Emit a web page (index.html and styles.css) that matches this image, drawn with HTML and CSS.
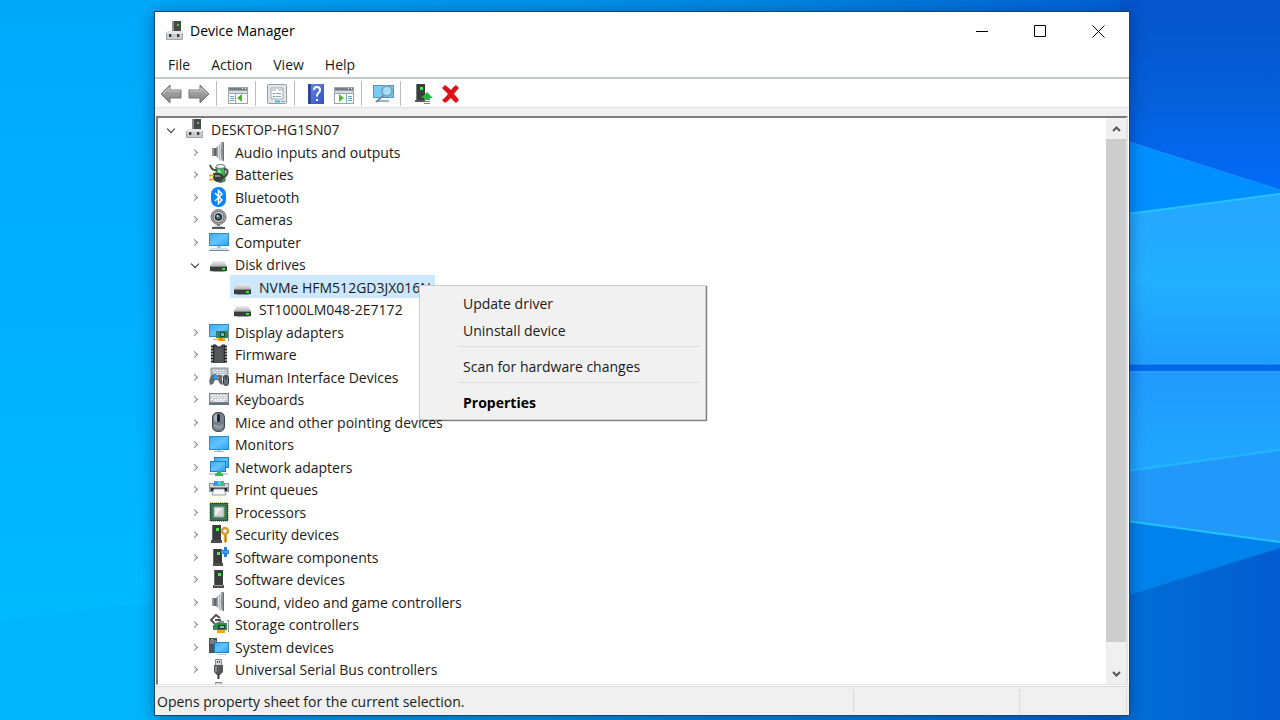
FILE: index.html
```html
<!DOCTYPE html>
<html lang="en">
<head>
    <meta charset="UTF-8">
    <title>Device Manager</title>
    <link rel="stylesheet" href="styles.css">
</head>
<body>
    <!-- Wallpaper -->
    <svg class="wallpaper" viewBox="0 0 1280 720" preserveAspectRatio="none" aria-hidden="true">
        <defs>
            <linearGradient id="sky" x1="0" y1="0" x2="1" y2="0">
                <stop offset="0" stop-color="#00adfb"/>
                <stop offset="0.15" stop-color="#00a4f6"/>
                <stop offset="0.6" stop-color="#0086e2"/>
                <stop offset="0.85" stop-color="#0064d6"/>
                <stop offset="1" stop-color="#0450c6"/>
            </linearGradient>
            <linearGradient id="leftGlow" x1="0" y1="0" x2="0" y2="1">
                <stop offset="0" stop-color="#00a8fa"/>
                <stop offset="0.45" stop-color="#00b0ff"/>
                <stop offset="0.84" stop-color="#00baff"/>
                <stop offset="1" stop-color="#00b4fc"/>
            </linearGradient>
            <linearGradient id="topRight" x1="0" y1="0" x2="0" y2="1">
                <stop offset="0" stop-color="#0554cb"/>
                <stop offset="0.5" stop-color="#0560da"/>
                <stop offset="1" stop-color="#026cfc"/>
            </linearGradient>
            <linearGradient id="pane" x1="0" y1="0" x2="0" y2="1">
                <stop offset="0" stop-color="#25a6ff"/>
                <stop offset="0.5" stop-color="#22b0ff"/>
                <stop offset="1" stop-color="#1f9cff"/>
            </linearGradient>
            <linearGradient id="pane2" x1="0" y1="0" x2="0" y2="1">
                <stop offset="0" stop-color="#209aff"/>
                <stop offset="1" stop-color="#20a8ff"/>
            </linearGradient>
            <linearGradient id="floor" x1="0" y1="0" x2="1" y2="0">
                <stop offset="0" stop-color="#006fd6"/>
                <stop offset="1" stop-color="#045cd0"/>
            </linearGradient>
        </defs>
        <rect width="1280" height="720" fill="url(#sky)"/>
        <rect width="160" height="720" fill="url(#leftGlow)"/>
        <path d="M0 621L160 601V720H0z" fill="#00b5fb"/>
        <path d="M1120 0H1280V200H1120z" fill="url(#topRight)"/>
        <path d="M1120 139L1280 190V230H1120z" fill="#008fff"/>
        <path d="M1120 215L1280 194V366H1120z" fill="url(#pane)"/>
        <path d="M1120 371H1280V453L1120 474z" fill="url(#pane2)"/>
        <path d="M1120 364H1280V371H1120z" fill="#0069ea"/>
        <path d="M1120 472L1280 450V543L1120 520z" fill="#2298fa"/>
        <path d="M1120 520L1280 542V550L1120 599z" fill="#0082ec"/>
        <path d="M1120 598L1280 548V720H1120z" fill="url(#floor)"/>
        <g fill="none" stroke="#22c4ff">
            <path d="M1120 139L1280 190" stroke="#1798fa"/>
            <path d="M1120 215L1280 194" stroke-width="2"/>
            <path d="M1120 364H1280M1120 372H1280" stroke="#2aa8ff"/>
            <path d="M1120 472L1280 450" stroke-width="2" stroke="#20b8ff"/>
            <path d="M1120 520L1280 542" stroke-width="2"/>
        </g>
    </svg>

    <!-- Icon set -->
    <svg class="sprite" aria-hidden="true">
        <defs>
            <linearGradient id="screen" x1="0" y1="0" x2="1" y2="1">
                <stop offset="0" stop-color="#3fa9f0"/>
                <stop offset="0.5" stop-color="#62c4ff"/>
                <stop offset="1" stop-color="#2ba2f5"/>
            </linearGradient>
            <linearGradient id="metal" x1="0" y1="0" x2="1" y2="0">
                <stop offset="0" stop-color="#5d6368"/>
                <stop offset="0.5" stop-color="#d5d9dc"/>
                <stop offset="1" stop-color="#777d82"/>
            </linearGradient>
            <linearGradient id="arrow" x1="0" y1="0" x2="0" y2="1">
                <stop offset="0" stop-color="#b4b4b4"/>
                <stop offset="1" stop-color="#828282"/>
            </linearGradient>
            <linearGradient id="lid" x1="0" y1="0" x2="0" y2="1">
                <stop offset="0" stop-color="#eeeeee"/>
                <stop offset="1" stop-color="#b4b6b8"/>
            </linearGradient>
            <linearGradient id="helpBlue" x1="0" y1="0" x2="1" y2="1">
                <stop offset="0" stop-color="#6b8be6"/>
                <stop offset="1" stop-color="#2f4fc0"/>
            </linearGradient>

            <symbol id="i-computer-root" viewBox="0 0 20 20">
                <path d="M7 0h9v11H7z" fill="#46484a"/>
                <path d="M7 0h2v11H7z" fill="#8a8c8e"/>
                <path d="M12 3h2v2h-2z" fill="#35e04a"/>
                <path d="M3 10h13l2 3v6H1v-6z" fill="#cbccd0"/>
                <path d="M3 10h13l2 3H1z" fill="#e3e4e6"/>
                <path d="M1.500 12v6.500h16V12" fill="none" stroke="#a4a6a9"/>
                <path d="M4 13h3v3H4zM12 13h3v3h-3z" fill="#3b3d40"/>
                <path d="M6 13h1v3H6zM14 13h1v3h-1z" fill="#9b9da0"/>
            </symbol>
            <symbol id="i-speaker" viewBox="0 0 20 20">
                <path d="M3 6h4v8H3z" fill="#5b6874"/>
                <path d="M3 6h2v8H3z" fill="#8c98a2"/>
                <path d="M7 6l5-5v18l-5-5z" fill="url(#metal)"/>
                <path d="M12 0h3v19.500l-3-2z" fill="#8d9499"/>
                <path d="M12 1l-1 9 1 8" fill="none" stroke="#e8ecef"/>
                <path d="M14.500 1v18" stroke="#676e73"/>
            </symbol>
            <symbol id="i-battery" viewBox="0 0 20 20">
                <path d="M7 3q5-3 9 0v14q-4 3-9 0z" fill="#35b950" stroke="#55605a"/>
                <ellipse cx="11.500" cy="2.500" rx="4.500" ry="2" fill="#eef3ee" stroke="#6b736e"/>
                <path d="M9 6q2 2 3 3" stroke="#8ef09c" stroke-width="2" fill="none"/>
                <path d="M1 1q2 6 7 5M15 5q5 0 3 5-2 4-6 3" fill="none" stroke="#4a4d50" stroke-width="2"/>
                <path d="M4 9h5q5 0 6 4-1 5-6 5-5-1-5-4z" fill="#3c3f42"/>
                <path d="M6 11h4l2 2H6z" fill="#85898c"/>
                <path d="M0 11.500h5M0 15.500h5" stroke="#e6a817" stroke-width="2"/>
            </symbol>
            <symbol id="i-bluetooth" viewBox="0 0 20 20">
                <rect x="2" y="0" width="15" height="20" rx="7" fill="#0a84ff"/>
                <path d="M6 6l7 7-3.500 3.500v-13L13 7l-7 7" fill="none" stroke="#fff" stroke-width="1.500"/>
            </symbol>
            <symbol id="i-camera" viewBox="0 0 20 20">
                <path d="M8 15h3v3H8z" fill="#85888a"/>
                <path d="M3 19h13" stroke="#55585a" stroke-width="2"/>
                <path d="M5 17.500h9" stroke="#c8cacc"/>
                <circle cx="9.500" cy="8" r="7.500" fill="#a7a9ab" stroke="#727476"/>
                <circle cx="9.500" cy="8" r="5.500" fill="#dadcdd" stroke="#616365"/>
                <circle cx="9.500" cy="8" r="3.800" fill="#2a2f35"/>
                <circle cx="9.500" cy="8" r="2" fill="#4b7ba5"/>
                <circle cx="8.500" cy="7" r="1" fill="#e0f0ff"/>
            </symbol>
            <symbol id="i-computer" viewBox="0 0 20 20">
                <path d="M0 1h20v13H0z" fill="#2f8cc8"/>
                <path d="M1 2h18v11H1z" fill="url(#screen)"/>
                <path d="M8 14h4v2H8z" fill="#b8c4cc"/>
                <path d="M2 16h16l2 3H0z" fill="#d5dde2"/>
                <path d="M0 18.500h20" stroke="#6d93ab"/>
            </symbol>
            <symbol id="i-disk" viewBox="0 0 20 20">
                <path d="M4 7h11l3 5H1z" fill="url(#lid)"/>
                <path d="M1 12h17v5q-8 1-17 0z" fill="#3a3c3e"/>
                <path d="M1 12h17v1H1z" fill="#85888a"/>
                <path d="M13 14h3v2h-3z" fill="#34e24a"/>
            </symbol>
            <symbol id="i-display" viewBox="0 0 20 20">
                <path d="M0 2h20v13H0z" fill="#2f8cc8"/>
                <path d="M1 3h18v11H1z" fill="url(#screen)"/>
                <path d="M4 17h5v1H4z" fill="#9fb2be"/>
                <path d="M7 9h12v7H7z" fill="#2e8a55"/>
                <path d="M18 8h2v11h-1v-9z" fill="#8c9194"/>
                <path d="M9 16h7v3H9z" fill="#f0a818"/>
                <path d="M11 10h5v5h-5z" fill="#1f4632"/>
                <path d="M12 11h3v3h-3z" fill="#6cc58e"/>
                <path d="M12 16v3" stroke="#b87400"/>
            </symbol>
            <symbol id="i-firmware" viewBox="0 0 20 20">
                <path d="M4 1h12v18H4z" fill="#48494b"/>
                <path d="M7 1h6l-1 2H8z" fill="#eee"/>
                <path d="M6 4h8v14H6z" fill="#56575a"/>
                <path d="M2 2.500h3M2 5.500h3M2 8.500h3M2 11.500h3M2 14.500h3M2 17.500h3M15 2.500h3M15 5.500h3M15 8.500h3M15 11.500h3M15 14.500h3M15 17.500h3" stroke="#222" stroke-width="2"/>
                <path d="M4 1h3l1 2h4l1-2h3" fill="none" stroke="#222"/>
            </symbol>
            <symbol id="i-hid" viewBox="0 0 20 20">
                <path d="M2 1h17v9H2z" fill="#b5bcc2" stroke="#8b949b"/>
                <path d="M4 3.500h13M5 5.500h13M4 7.500h13" stroke="#f4f6f7" stroke-dasharray="2 1"/>
                <path d="M3 8q3-2 5 0h2q3-1 3 4l1 6-3-1-2-4H6l-2 4-3 1q-2-6 2-10z" fill="#5f6a74"/>
                <path d="M5 8h4v4H5z" fill="#2ba0f2"/>
                <path d="M8 10h2v2H8z" fill="#e8713a"/>
                <rect x="14.500" y="8.500" width="5" height="10" rx="2.500" fill="#68747f" stroke="#303b45"/>
                <path d="M17 9v4" stroke="#202830"/>
            </symbol>
            <symbol id="i-keyboard" viewBox="0 0 20 20">
                <path d="M0 4h20v12H0z" fill="#7c8790"/>
                <path d="M1 5h18v8H1z" fill="#c6ccd1"/>
                <path d="M2 6.500h16M3 8.500h14M2 10.500h16" stroke="#fff" stroke-dasharray="2 1"/>
                <path d="M5 12h10" stroke="#fff"/>
                <path d="M0 14h20v2H0z" fill="#66727c"/>
            </symbol>
            <symbol id="i-mouse" viewBox="0 0 20 20">
                <rect x="3.500" y="0.500" width="12" height="19" rx="5" fill="#737f8a" stroke="#37414a"/>
                <path d="M5 5q0-3 3-3v8q-2 0-3-2z" fill="#aab4bc"/>
                <rect x="8" y="2" width="3" height="8" rx="1" fill="#20272d"/>
                <path d="M5 12q5 3 9 0v3q-4 4-9 0z" fill="#929da7"/>
            </symbol>
            <symbol id="i-monitor" viewBox="0 0 20 20">
                <path d="M0 2h20v14H0z" fill="#2f8cc8"/>
                <path d="M1 3h18v12H1z" fill="url(#screen)"/>
                <path d="M8 16h4v1H8z" fill="#c8d2d8"/>
                <path d="M5 17.500h10" stroke="#a8b6c0"/>
            </symbol>
            <symbol id="i-network" viewBox="0 0 20 20">
                <path d="M5 0h15v11H5z" fill="#1f7fc0"/>
                <path d="M6 1h13v9H6z" fill="url(#screen)"/>
                <path d="M1 4h16v11H1z" fill="#1f7fc0"/>
                <path d="M2 5h14v9H2z" fill="url(#screen)"/>
                <path d="M0 16h19v2H0z" fill="#cdd3d6"/>
                <path d="M8 14h4v2l2 1v2H6v-2l2-1z" fill="#36b552"/>
            </symbol>
            <symbol id="i-printer" viewBox="0 0 20 20">
                <path d="M5 2h10v5H5z" fill="#2d9df0"/>
                <path d="M9 2h3v4H9z" fill="#40d8e0"/>
                <path d="M13 2h2v4h-2z" fill="#48c85a"/>
                <path d="M0 4h5v2h10V4h5v9H0z" fill="#8a9096"/>
                <path d="M1 5h3v2h12V5h3v3H1z" fill="#d7dade"/>
                <path d="M2 9h16v3H2z" fill="#26292c"/>
                <path d="M5 10h10l2 6H3z" fill="#f5f7f8" stroke="#9aa0a5"/>
            </symbol>
            <symbol id="i-processor" viewBox="0 0 20 20">
                <path d="M1 1h18v18H1z" fill="none" stroke="#c6a748" stroke-width="2" stroke-dasharray="1 1"/>
                <path d="M1 1h18v18H1z" fill="#3a7557"/>
                <path d="M1.500 1.500h17v17h-17z" fill="none" stroke="#24573e"/>
                <path d="M5 5h10v10H5z" fill="#d3d5d4" stroke="#8ea498"/>
                <path d="M6 6h8l-8 8z" fill="#ecedec"/>
            </symbol>
            <symbol id="i-tower" viewBox="0 0 20 20">
                <path d="M5 1h9v16H5z" fill="#3a3c3e"/>
                <path d="M5 1h1v16H5z" fill="#6a6d70"/>
                <path d="M9 4h3v3H9z" fill="#3df04a"/>
                <path d="M4 16h11v3H4z" fill="#4a4c4f"/>
                <path d="M5 16h9v1H5z" fill="#a0a2a4"/>
            </symbol>
            <symbol id="i-security" viewBox="0 0 20 20">
                <path d="M3 1h9v16H3z" fill="#3a3c3e"/>
                <path d="M3 1h1v16H3z" fill="#6a6d70"/>
                <path d="M7 4h3v3H7z" fill="#3df04a"/>
                <path d="M2 16h11v3H2z" fill="#4a4c4f"/>
                <circle cx="16" cy="7" r="3" fill="none" stroke="#d89d32" stroke-width="2.500"/>
                <path d="M15 10h3v8l-1 1-2-1v-2l-1-1 1-1z" fill="#e0aa45"/>
                <path d="M16.500 11v7" stroke="#a87418"/>
            </symbol>
            <symbol id="i-component" viewBox="0 0 20 20">
                <path d="M4 2h9v15H4z" fill="#3a3c3e"/>
                <path d="M4 2h1v15H4z" fill="#6a6d70"/>
                <path d="M8 5h3v3H8z" fill="#3df04a"/>
                <path d="M4 16h10v3H4z" fill="#4a4c4f"/>
                <path d="M15 0h3v3h2v4h-2v3h-3V7h-3V3h3z" fill="#2583d0"/>
                <path d="M12 5h8" stroke="#68b2ec"/>
            </symbol>
            <symbol id="i-storage" viewBox="0 0 20 20">
                <path d="M11 4L7 1 2 6l5 5M6 6h5v4" fill="none" stroke="#505254" stroke-width="2"/>
                <path d="M4 13q5-6 11-5" fill="none" stroke="#8c9092" stroke-width="2"/>
                <path d="M4 12l4-3h10v7H4z" fill="#2e8a55"/>
                <path d="M9 11h7v4H9z" fill="#1d4430"/>
                <path d="M11 12h4v2h-4z" fill="#79c894"/>
                <path d="M18 6h2v12h-1V9z" fill="#909598"/>
                <path d="M8 16h8v3H8z" fill="#f0a818"/>
            </symbol>
            <symbol id="i-system" viewBox="0 0 20 20">
                <path d="M0 1h8v15H0z" fill="#4c5257"/>
                <path d="M1 4h6M1 6h6" stroke="#a5abb0"/>
                <path d="M2 2h2v1H2z" fill="#40e050"/>
                <path d="M5 5h15v11H5z" fill="#1f7fc0"/>
                <path d="M6 6h13v9H6z" fill="url(#screen)"/>
                <path d="M9 17.500h8" stroke="#a8c4d6"/>
            </symbol>
            <symbol id="i-usb" viewBox="0 0 20 20">
                <path d="M6.500 0.500h6v6h-6z" fill="#d4d6d8" stroke="#86898b"/>
                <path d="M8 2h1v2H8zM10 2h1v2h-1z" fill="#55585a"/>
                <path d="M5 6h9v7l-3 3H8l-3-3z" fill="#56595c"/>
                <path d="M6 7h2v6H6z" fill="#85898c"/>
                <path d="M9.500 15v5" stroke="#3c3f42" stroke-width="2"/>
            </symbol>

            <symbol id="t-back" viewBox="0 0 22 22">
                <path d="M1 11l9-9v5h11v8H10v5z" fill="url(#arrow)" stroke="#777"/>
                <path d="M3 11l6-6v3h11" fill="none" stroke="#c9c9c9"/>
            </symbol>
            <symbol id="t-forward" viewBox="0 0 22 22">
                <path d="M21 11l-9-9v5H1v8h11v5z" fill="url(#arrow)" stroke="#777"/>
                <path d="M2 8h11V5l6 6" fill="none" stroke="#c9c9c9"/>
            </symbol>
            <symbol id="t-tree" viewBox="0 0 22 22">
                <path d="M1 4h20v17H1z" fill="#9aa3aa"/>
                <path d="M2 5h18v2H2z" fill="#717e89"/>
                <path d="M15 5.500h1M18 5.500h1" stroke="#fff"/>
                <path d="M2 8h18v2H2z" fill="#d9dde0"/>
                <path d="M2 11h6v9H2zM9 11h11v9H9z" fill="#fff"/>
                <path d="M3 13.500h4M3 15.500h4M3 17.500h4" stroke="#6aa1cc"/>
                <path d="M15 11v8l-5-4z" fill="#4cb531"/>
            </symbol>
            <symbol id="t-properties" viewBox="0 0 22 22">
                <rect x="1.500" y="1.500" width="19" height="19" rx="1" fill="#e3e6e8" stroke="#959da3"/>
                <path d="M5 5h12v11H5z" fill="#fff" stroke="#a1a9af"/>
                <path d="M6 7h4M12 7h5" stroke="#a1a9af"/>
                <path d="M7 10.500h2M7 13.500h2" stroke="#36a0dd"/>
                <path d="M10 10.500h5M10 13.500h5" stroke="#98a0a6"/>
                <path d="M9 18.500h5" stroke="#35c3ee" stroke-width="2"/>
                <path d="M15 18.500h4" stroke="#98a0a6"/>
            </symbol>
            <symbol id="t-help" viewBox="0 0 22 22">
                <path d="M3 1h16v20H3z" fill="url(#helpBlue)"/>
                <path d="M3 1h3v20H3z" fill="#2b479f"/>
                <path d="M9 7q0-3 3-3t3 3q0 2-2 3.500-1 1-1 3" fill="none" stroke="#fff" stroke-width="2"/>
                <path d="M11 16h2v2h-2z" fill="#fff"/>
            </symbol>
            <symbol id="t-action" viewBox="0 0 22 22">
                <path d="M1 4h20v17H1z" fill="#9aa3aa"/>
                <path d="M2 5h18v2H2z" fill="#717e89"/>
                <path d="M15 5.500h1M18 5.500h1" stroke="#fff"/>
                <path d="M2 8h18v2H2z" fill="#d9dde0"/>
                <path d="M2 11h11v9H2zM14 11h6v9h-6z" fill="#fff"/>
                <path d="M15 13.500h4M15 15.500h4M15 17.500h4" stroke="#6aa1cc"/>
                <path d="M6 11v8l5-4z" fill="#4cb531"/>
            </symbol>
            <symbol id="t-scan" viewBox="0 0 22 22">
                <path d="M1 2h21v13H1z" fill="#4a97c8"/>
                <path d="M2 3h19v11H2z" fill="#78cbf5"/>
                <path d="M5 18h12" stroke="#9db4c3" stroke-width="2"/>
                <path d="M12 12l-8 7" stroke="#7490a6" stroke-width="2"/>
                <circle cx="15" cy="8" r="5" fill="#a8defa" stroke="#7ca4bf" stroke-width="2"/>
            </symbol>
            <symbol id="t-update" viewBox="0 0 22 22">
                <path d="M5 1h9v17H5z" fill="#3a3c3e"/>
                <path d="M5 1h1v17H5z" fill="#77797b"/>
                <path d="M9 4h3v3H9z" fill="#3df04a"/>
                <path d="M4 17h9v2H4z" fill="#55585a"/>
                <path d="M16 9l6 6h-3v2h-6v-2h-3z" fill="#27b53a"/>
                <path d="M13 18h6v1h-6zM13 20h6v1h-6z" fill="#27b53a"/>
            </symbol>
            <symbol id="t-remove" viewBox="0 0 22 22">
                <path d="M3 5l3-3q3 2 6 5 2-3 5-5l3 3q-3 3-5 6 3 3 5 6l-3 3q-3-2-5-5-3 3-6 5l-3-3q3-2 6-6-3-3-6-6z" fill="#dd1219"/>
            </symbol>
        </defs>
    </svg>

    <main class="window">
        <header class="titlebar">
            <svg class="icon"><use href="#i-computer-root"/></svg>
            <h1>Device Manager</h1>
            <div class="window-controls">
                <button type="button" aria-label="Minimize"><svg viewBox="0 0 13 13"><path d="M0 6.500h12"/></svg></button>
                <button type="button" aria-label="Maximize"><svg viewBox="0 0 13 13"><path d="M0.500 0.500h11v11h-11z"/></svg></button>
                <button type="button" aria-label="Close"><svg viewBox="0 0 13 13"><path d="M0.500 0.500l12 12M12.500 0.500l-12 12"/></svg></button>
            </div>
        </header>

        <nav class="menubar">
            <button type="button">File</button>
            <button type="button">Action</button>
            <button type="button">View</button>
            <button type="button">Help</button>
        </nav>

        <div class="toolbar">
            <button type="button" aria-label="Back"><svg><use href="#t-back"/></svg></button>
            <button type="button" aria-label="Forward"><svg><use href="#t-forward"/></svg></button>
            <span class="separator"></span>
            <button type="button" aria-label="Show console tree"><svg><use href="#t-tree"/></svg></button>
            <span class="separator"></span>
            <button type="button" aria-label="Properties"><svg><use href="#t-properties"/></svg></button>
            <span class="separator"></span>
            <button type="button" aria-label="Help"><svg><use href="#t-help"/></svg></button>
            <button type="button" aria-label="Show action pane"><svg><use href="#t-action"/></svg></button>
            <span class="separator"></span>
            <button type="button" aria-label="Scan for hardware changes"><svg><use href="#t-scan"/></svg></button>
            <span class="separator"></span>
            <button type="button" aria-label="Update driver"><svg><use href="#t-update"/></svg></button>
            <button type="button" aria-label="Uninstall device"><svg><use href="#t-remove"/></svg></button>
        </div>

        <div class="content">
            <ul class="tree">
                <li class="root"><button type="button" class="expander open" aria-label="Collapse"></button><span class="node"><svg class="icon"><use href="#i-computer-root"/></svg>DESKTOP-HG1SN07</span></li>
                <li><button type="button" class="expander" aria-label="Expand"></button><span class="node"><svg class="icon"><use href="#i-speaker"/></svg>Audio inputs and outputs</span></li>
                <li><button type="button" class="expander" aria-label="Expand"></button><span class="node"><svg class="icon"><use href="#i-battery"/></svg>Batteries</span></li>
                <li><button type="button" class="expander" aria-label="Expand"></button><span class="node"><svg class="icon"><use href="#i-bluetooth"/></svg>Bluetooth</span></li>
                <li><button type="button" class="expander" aria-label="Expand"></button><span class="node"><svg class="icon"><use href="#i-camera"/></svg>Cameras</span></li>
                <li><button type="button" class="expander" aria-label="Expand"></button><span class="node"><svg class="icon"><use href="#i-computer"/></svg>Computer</span></li>
                <li><button type="button" class="expander open" aria-label="Collapse"></button><span class="node"><svg class="icon"><use href="#i-disk"/></svg>Disk drives</span></li>
                <li class="device selected">
                    <span class="node"><svg class="icon"><use href="#i-disk"/></svg>NVMe HFM512GD3JX016N</span>
                    <div class="context-menu">
                        <button type="button">Update driver</button>
                        <button type="button">Uninstall device</button>
                        <hr>
                        <button type="button">Scan for hardware changes</button>
                        <hr>
                        <button type="button" class="default">Properties</button>
                    </div>
                </li>
                <li class="device"><span class="node"><svg class="icon"><use href="#i-disk"/></svg>ST1000LM048-2E7172</span></li>
                <li><button type="button" class="expander" aria-label="Expand"></button><span class="node"><svg class="icon"><use href="#i-display"/></svg>Display adapters</span></li>
                <li><button type="button" class="expander" aria-label="Expand"></button><span class="node"><svg class="icon"><use href="#i-firmware"/></svg>Firmware</span></li>
                <li><button type="button" class="expander" aria-label="Expand"></button><span class="node"><svg class="icon"><use href="#i-hid"/></svg>Human Interface Devices</span></li>
                <li><button type="button" class="expander" aria-label="Expand"></button><span class="node"><svg class="icon"><use href="#i-keyboard"/></svg>Keyboards</span></li>
                <li><button type="button" class="expander" aria-label="Expand"></button><span class="node"><svg class="icon"><use href="#i-mouse"/></svg>Mice and other pointing devices</span></li>
                <li><button type="button" class="expander" aria-label="Expand"></button><span class="node"><svg class="icon"><use href="#i-monitor"/></svg>Monitors</span></li>
                <li><button type="button" class="expander" aria-label="Expand"></button><span class="node"><svg class="icon"><use href="#i-network"/></svg>Network adapters</span></li>
                <li><button type="button" class="expander" aria-label="Expand"></button><span class="node"><svg class="icon"><use href="#i-printer"/></svg>Print queues</span></li>
                <li><button type="button" class="expander" aria-label="Expand"></button><span class="node"><svg class="icon"><use href="#i-processor"/></svg>Processors</span></li>
                <li><button type="button" class="expander" aria-label="Expand"></button><span class="node"><svg class="icon"><use href="#i-security"/></svg>Security devices</span></li>
                <li><button type="button" class="expander" aria-label="Expand"></button><span class="node"><svg class="icon"><use href="#i-component"/></svg>Software components</span></li>
                <li><button type="button" class="expander" aria-label="Expand"></button><span class="node"><svg class="icon"><use href="#i-tower"/></svg>Software devices</span></li>
                <li><button type="button" class="expander" aria-label="Expand"></button><span class="node"><svg class="icon"><use href="#i-speaker"/></svg>Sound, video and game controllers</span></li>
                <li><button type="button" class="expander" aria-label="Expand"></button><span class="node"><svg class="icon"><use href="#i-storage"/></svg>Storage controllers</span></li>
                <li><button type="button" class="expander" aria-label="Expand"></button><span class="node"><svg class="icon"><use href="#i-system"/></svg>System devices</span></li>
                <li><button type="button" class="expander" aria-label="Expand"></button><span class="node"><svg class="icon"><use href="#i-usb"/></svg>Universal Serial Bus controllers</span></li>
                <li><button type="button" class="expander" aria-label="Expand"></button><span class="node"><svg class="icon"><use href="#i-usb"/></svg></span></li>
            </ul>
            <div class="scrollbar">
                <button type="button" aria-label="Scroll up"><svg viewBox="0 0 9 6"><path d="M1 5l3.500-3.500L8 5"/></svg></button>
                <div class="track"><div class="thumb"></div></div>
                <button type="button" aria-label="Scroll down"><svg viewBox="0 0 9 6"><path d="M1 1l3.500 3.500L8 1"/></svg></button>
            </div>
        </div>

        <footer class="statusbar">
            <span class="message">Opens property sheet for the current selection.</span>
            <span class="cell"></span>
            <span class="cell small"></span>
        </footer>
    </main>
</body>
</html>
```

FILE: styles.css
```css
*,
*::before {
    box-sizing: border-box;
}

body {
    margin: 0;
    height: 100vh;
    padding: 11px 150px 4px 154px;
    overflow: hidden;
    font-family: "Open Sans", "Segoe UI", sans-serif;
    font-size: 14px;
    line-height: 20px;
    color: #1a1a1a;
}

button {
    padding: 0;
    border: none;
    background: none;
    font: inherit;
    color: inherit;
}

.wallpaper {
    position: absolute;
    inset: 0;
    z-index: -1;
    width: 100%;
    height: 100%;
}

.sprite {
    position: absolute;
    width: 0;
    height: 0;
}

.icon {
    width: 20px;
    height: 20px;
    flex: none;
}

.window {
    display: flex;
    flex-direction: column;
    height: 100%;
    border: 1px solid #16486c;
    background-color: #fff;
    box-shadow: 0 2px 14px rgba(0, 20, 60, 0.4);
}

/* Title bar */
.titlebar {
    display: flex;
    align-items: center;
    height: 38px;
    flex: none;
    padding: 0 2px 0 10px;
}

.titlebar h1 {
    margin: 0 0 0 5px;
    font-size: 14px;
    font-weight: normal;
    color: #000;
}

.window-controls {
    display: flex;
    height: 100%;
    margin-left: auto;
}

.window-controls button {
    width: 58px;
}

.window-controls svg {
    display: block;
    width: 13px;
    height: 13px;
    margin: 0 auto;
    fill: none;
    stroke: #000;
}

/* Menu bar */
.menubar {
    display: flex;
    align-items: center;
    gap: 21px;
    height: 29px;
    flex: none;
    padding: 2px 13px 0;
    border-bottom: 2px solid #c6c9cc;
}

/* Toolbar */
.toolbar {
    display: flex;
    align-items: center;
    height: 29px;
    flex: none;
    padding: 1px 0 0 2px;
    border-bottom: 1px solid #e2e2e2;
}

.toolbar button {
    display: flex;
    justify-content: center;
    width: 28px;
}

.toolbar svg {
    width: 22px;
    height: 22px;
}

.toolbar .separator {
    width: 1px;
    height: 25px;
    margin: 0 7px 0 3px;
    background-color: #bdbdbd;
}

/* Device tree */
.content {
    display: flex;
    flex: 1;
    min-height: 0;
    border: 1px solid #fff;
    border-top: 8px solid #f0f0f0;
}

.tree {
    flex: 1;
    margin: 0;
    padding: 0;
    overflow: hidden;
    list-style: none;
    border-top: 2px solid #7c7c7c;
    border-left: 2px solid #7c7c7c;
    border-bottom: 1px solid #e3e3e3;
}

.tree li {
    position: relative;
    display: flex;
    height: 22px;
    padding-left: 29px;
}

.tree li:nth-child(even) {
    height: 23px;
}

.tree li.root {
    padding-left: 5px;
}

.tree li.device {
    padding-left: 69px;
}

.node {
    display: flex;
    align-items: center;
    gap: 6px;
    margin-left: 3px;
    padding: 2px 4px 0 3px;
    white-space: nowrap;
}

.node .icon {
    margin-bottom: 2px;
}

.selected .node {
    background-color: #cce8ff;
}

.expander {
    display: flex;
    align-items: center;
    justify-content: center;
    width: 16px;
    padding: 1px 2px 0 0;
}

.expander::before {
    content: "";
    width: 5px;
    height: 5px;
    border-top: 1px solid #858585;
    border-right: 1px solid #858585;
    transform: rotate(45deg);
}

.expander.open {
    padding: 0;
}

.expander.open::before {
    width: 6px;
    height: 6px;
    border-color: #303030;
    transform: rotate(135deg);
}

/* Context menu */
.context-menu {
    position: absolute;
    top: 10px;
    left: 261px;
    z-index: 1;
    width: 287px;
    padding: 4px 3px 3px 2px;
    border: 1px solid #ccc;
    background-color: #f1f1f1;
    box-shadow: 1px 1px 1px rgba(0, 0, 0, 0.5);
}

.context-menu button {
    display: block;
    width: 100%;
    height: 27px;
    padding-left: 41px;
    text-align: left;
}

.context-menu .default {
    font-weight: bold;
    color: #000;
}

.context-menu hr {
    height: 1px;
    margin: 2px 2px 6px 36px;
    border: none;
    background-color: #dcdcdc;
}

/* Scroll bar */
.scrollbar {
    display: flex;
    flex-direction: column;
    width: 22px;
    border-top: 2px solid #7c7c7c;
    border-right: 2px solid #e3e3e3;
    border-bottom: 1px solid #e3e3e3;
    background-color: #f0f0f0;
}

.scrollbar button {
    height: 21px;
}

.scrollbar svg {
    display: block;
    width: 9px;
    height: 6px;
    margin: 0 auto;
    fill: none;
    stroke: #555;
    stroke-width: 2;
}

.track {
    flex: 1;
}

.thumb {
    height: 96%;
    background-color: #cdcdcd;
}

/* Status bar */
.statusbar {
    display: flex;
    height: 29px;
    flex: none;
    padding: 2px 2px 1px;
    border-top: 1px solid #dadada;
    background-color: #f0f0f0;
}

.statusbar .message {
    flex: 1;
    padding-top: 3px;
}

.statusbar span {
    border-right: 1px solid #dcdcdc;
}

.statusbar .cell {
    width: 166px;
}

.statusbar .small {
    width: 107px;
}
```
